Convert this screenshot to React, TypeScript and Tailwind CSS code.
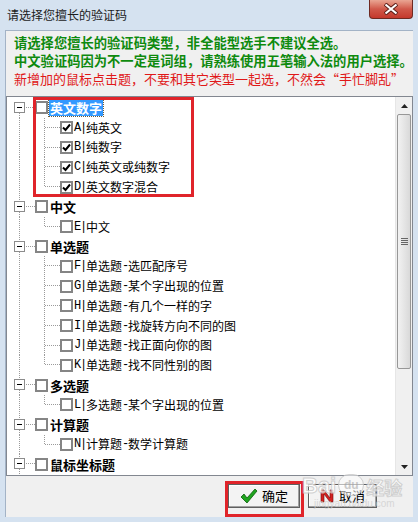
import React from 'react'

type Child = { key: string; label: string; checked?: boolean }
type Group = { label: string; selected?: boolean; children: Child[] }

const ROW = 19.8

const tree: Group[] = [
  {
    label: '英文数字',
    selected: true,
    children: [
      { key: 'A', label: '纯英文', checked: true },
      { key: 'B', label: '纯数字', checked: true },
      { key: 'C', label: '纯英文或纯数字', checked: true },
      { key: 'D', label: '英文数字混合', checked: true }
    ]
  },
  { label: '中文', children: [{ key: 'E', label: '中文' }] },
  {
    label: '单选题',
    children: [
      { key: 'F', label: '单选题-选匹配序号' },
      { key: 'G', label: '单选题-某个字出现的位置' },
      { key: 'H', label: '单选题-有几个一样的字' },
      { key: 'I', label: '单选题-找旋转方向不同的图' },
      { key: 'J', label: '单选题-找正面向你的图' },
      { key: 'K', label: '单选题-找不同性别的图' }
    ]
  },
  { label: '多选题', children: [{ key: 'L', label: '多选题-某个字出现的位置' }] },
  { label: '计算题', children: [{ key: 'N', label: '计算题-数学计算题' }] },
  { label: '鼠标坐标题', children: [] }
]

const cjk = '"Noto Sans CJK SC", "Liberation Sans", sans-serif'

function CheckBox({ checked }: { checked?: boolean }) {
  return (
    <span className="flex h-[13px] w-[13px] shrink-0 items-center justify-center border-2 border-[#858585] bg-white">
      {checked && (
        <svg width="9" height="9" viewBox="0 0 9 9">
          <path d="M1 4.5 L3.5 7 L8 1.5" fill="none" stroke="#000" strokeWidth="2" />
        </svg>
      )}
    </span>
  )
}

// mixed label: ascii half-width in mono, hanzi in CJK
function ItemText({ text }: { text: string }) {
  const parts = text.match(/[\x00-\x7f]+|[^\x00-\x7f]+/g) ?? []
  return (
    <span className="flex items-center text-black">
      {parts.map((p, i) =>
        /^[\x00-\x7f]/.test(p) ? (
          <span
            key={i}
            className="text-[12px] leading-[14px] tracking-[-1.2px]"
            style={{ fontFamily: '"Liberation Mono", monospace' }}
          >
            {p}
          </span>
        ) : (
          <span key={i} className="text-[12px] leading-[14px]">
            {p}
          </span>
        )
      )}
    </span>
  )
}

const dot = { stroke: '#9a9a9a', strokeDasharray: '1 1', shapeRendering: 'crispEdges' as const }

function GroupRow({ g, first }: { g: Group; first: boolean }) {
  return (
    <div className="flex items-center" style={{ height: ROW }}>
      <svg width="28" height={ROW} className="shrink-0">
        {!first && <line x1="12.5" y1="0" x2="12.5" y2="4" {...dot} />}
        <line x1="12.5" y1="15" x2="12.5" y2={ROW} {...dot} />
        <rect x="7.5" y="4.5" width="10" height="10" fill="#fff" stroke="#8c8c8c" />
        <line x1="10" y1="9.5" x2="15" y2="9.5" stroke="#000" shapeRendering="crispEdges" />
        <line x1="19" y1="9.5" x2="28" y2="9.5" {...dot} />
      </svg>
      <CheckBox />
      <span
        className={
          'ml-[1px] px-[1px] text-[13px] font-bold leading-[17px] ' +
          (g.selected ? 'bg-[#3399ff] text-white outline-1 outline-dotted outline-[#6b5b3b]' : 'text-black')
        }
      >
        {g.label}
      </span>
    </div>
  )
}

function ChildRow({ c, last }: { c: Child; last: boolean }) {
  return (
    <div className="flex items-center" style={{ height: ROW }}>
      <svg width="53" height={ROW} className="shrink-0">
        <line x1="12.5" y1="0" x2="12.5" y2={ROW} {...dot} />
        <line x1="37.5" y1="0" x2="37.5" y2={last ? 10 : ROW} {...dot} />
        <line x1="38" y1="9.5" x2="53" y2="9.5" {...dot} />
      </svg>
      <CheckBox checked={c.checked} />
      <span className="ml-[1px]">
        <ItemText text={`${c.key}|${c.label}`} />
      </span>
    </div>
  )
}

function ScrollBar() {
  return (
    <div className="flex w-[17px] shrink-0 flex-col border-l border-[#e6e6e6] bg-[#f0f0f0]">
      <div className="flex h-[17px] items-center justify-center">
        <svg width="7" height="4" viewBox="0 0 7 4">
          <path d="M0 4 L3.5 0 L7 4 Z" fill="#222" />
        </svg>
      </div>
      <div className="mx-[1px] flex h-[255px] items-center justify-center rounded-[2px] border border-[#979797] bg-gradient-to-r from-[#f2f2f2] to-[#d9d9d9]">
        <div className="flex w-[7px] flex-col gap-[1px]">
          <div className="h-px bg-[#666]" />
          <div className="h-px bg-[#666]" />
          <div className="h-px bg-[#666]" />
          <div className="h-px bg-[#666]" />
        </div>
      </div>
      <div className="flex-1" />
      <div className="flex h-[17px] items-center justify-center">
        <svg width="7" height="4" viewBox="0 0 7 4">
          <path d="M0 0 L3.5 4 L7 0 Z" fill="#222" />
        </svg>
      </div>
    </div>
  )
}

export default function App() {
  return (
    <div
      className="relative flex h-[522px] w-[418px] flex-col overflow-hidden bg-[#d5e2f0]"
      style={{ fontFamily: cjk }}
    >
      {/* title bar */}
      <div className="flex h-[30px] shrink-0 justify-between">
        <div className="pl-[7px] pt-[7px] text-[12px] leading-[16px] text-[#1b1b1b]">请选择您擅长的验证码</div>
        <div className="mr-[5px] flex h-[19px] w-[44px] items-center justify-center rounded-b-[4px] border border-t-0 border-[#6e2a22] bg-gradient-to-b from-[#e9a593] via-[#d0584a] to-[#c4382c]">
          <svg width="14" height="12" viewBox="0 0 14 12">
            <path d="M1 1 L13 11 M13 1 L1 11" stroke="#5a1d17" strokeWidth="4" />
            <path d="M1.5 1.5 L12.5 10.5 M12.5 1.5 L1.5 10.5" stroke="#fff" strokeWidth="2.2" />
          </svg>
        </div>
      </div>

      {/* client */}
      <div className="mx-[5px] mb-[5px] flex flex-1 flex-col border-l border-t border-[#a3b3c6] bg-[#f0f0f0]">
        <div className="h-[65px] shrink-0 whitespace-nowrap pl-[8px] pt-[3px] text-[13.3px] leading-[18px]">
          <div className="font-bold text-[#0e8a0e]">请选择您擅长的验证码类型，非全能型选手不建议全选。</div>
          <div className="font-bold text-[#0e8a0e]">中文验证码因为不一定是词组，请熟练使用五笔输入法的用户选择。</div>
          <div className="text-[13px] text-[#e01818]">新增加的鼠标点击题，不要和其它类型一起选，不然会“手忙脚乱”</div>
        </div>

        <div className="flex h-[380px] shrink-0 border border-[#828790] bg-white">
          <div className="flex flex-1 flex-col overflow-hidden pt-[1px]">
            {tree.map((g, gi) => (
              <React.Fragment key={g.label}>
                <GroupRow g={g} first={gi === 0} />
                {g.children.map((c, ci) => (
                  <ChildRow key={c.key} c={c} last={ci === g.children.length - 1} />
                ))}
              </React.Fragment>
            ))}
          </div>
          <ScrollBar />
        </div>

        <div className="flex flex-1 justify-end gap-[8px] pr-[36px] pt-[8px]">
          <button className="flex h-[24px] w-[72px] items-center justify-center gap-[4px] border border-[#5f5f5f] bg-[#f3f3f3] text-[13px] text-black shadow-[inset_-1px_-1px_0_#a0a0a0,inset_1px_1px_0_#fff]">
            <svg width="18" height="16" viewBox="0 0 18 16">
              <path d="M1 9 L4 6 L7 10 L15 1 L17 3 L7 15 Z" fill="#1fa41f" stroke="#0b5e0b" strokeWidth="0.8" />
            </svg>
            确定
          </button>
          <button className="flex h-[24px] w-[69px] items-center justify-center gap-[5px] border border-[#5f5f5f] bg-[#f3f3f3] text-[13px] text-black shadow-[inset_-1px_-1px_0_#a0a0a0,inset_1px_1px_0_#fff]">
            <svg width="14" height="14" viewBox="0 0 14 14">
              <path d="M1 1 H4 L10 9 V1 H13 V13 H10 L4 5 V13 H1 Z" fill="#d42020" stroke="#6b0d0d" strokeWidth="0.6" />
            </svg>
            取消
          </button>
        </div>
      </div>

      {/* red annotation boxes */}
      <div className="pointer-events-none absolute left-[33px] top-[97px] h-[100px] w-[161px] border-[3px] border-[#e0242a]" />
      <div className="pointer-events-none absolute left-[225px] top-[481px] h-[36px] w-[79px] border-[3px] border-[#e0242a]" />

      {/* baidu watermark */}
      <div className="pointer-events-none absolute left-[302px] top-[474px] flex flex-col items-start opacity-80">
        <div className="flex items-end gap-[2px]">
          <span
            className="text-[22px] font-bold leading-[24px] text-white"
            style={{ fontFamily: '"Liberation Sans", sans-serif', WebkitTextStroke: '1px #c8c8c8' }}
          >
            Bai
          </span>
          <span
            className="mb-[2px] flex h-[22px] w-[26px] items-center justify-center rounded-full border border-[#c8c8c8] bg-white/70 text-[12px] font-bold text-[#c0c0c0]"
            style={{ fontFamily: '"Liberation Sans", sans-serif' }}
          >
            du
          </span>
          <span className="text-[18px] font-bold leading-[22px] text-white" style={{ WebkitTextStroke: '1px #c8c8c8' }}>
            经验
          </span>
        </div>
        <span className="ml-[12px] text-[10px] leading-[12px] text-[#d0d0d0]" style={{ fontFamily: '"Liberation Sans", sans-serif' }}>
          jingyan.baidu.com
        </span>
      </div>
    </div>
  )
}
